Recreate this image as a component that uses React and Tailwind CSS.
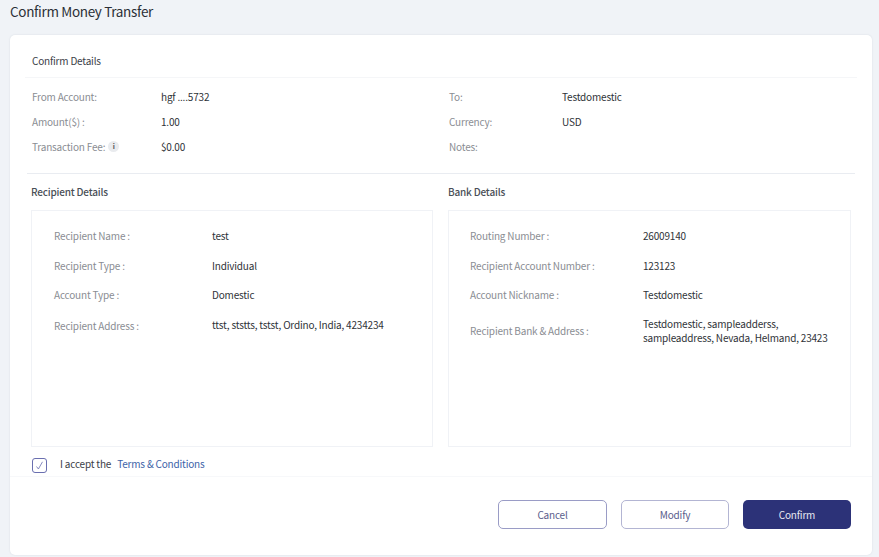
const font = { fontFamily: '"Noto Sans CJK SC", "Open Sans", sans-serif' };

const summaryLeft = [
  ['From Account:', 'hgf ....5732'],
  ['Amount($) :', '1.00'],
  ['Transaction Fee:', '$0.00'],
];

const summaryRight = [
  ['To:', 'Testdomestic'],
  ['Currency:', 'USD'],
  ['Notes:', ''],
];

const recipient = [
  ['Recipient Name :', 'test'],
  ['Recipient Type :', 'Individual'],
  ['Account Type :', 'Domestic'],
];

const bank = [
  ['Routing Number :', '26009140'],
  ['Recipient Account Number :', '123123'],
  ['Account Nickname :', 'Testdomestic'],
];

function SummaryRow({ label, value, labelWidth }) {
  return (
    <div className={`flex h-[25px] items-center text-[10px] ${labelWidth}`}>
      <div className="flex w-[129px] items-center gap-[3px] text-[#8a8d93]">
        {label}
        {label === 'Transaction Fee:' && (
          <span className="flex h-[11px] w-[11px] items-center justify-center rounded-full bg-[#e9ebee] text-[7px] font-bold text-[#555]">i</span>
        )}
      </div>
      <div className="text-[#2f3338]">{value}</div>
    </div>
  );
}

function DetailRow({ label, value, valueLeft }) {
  return (
    <div className="flex h-[29.5px] items-center text-[10px]">
      <div className={`text-[#8a8d93] ${valueLeft}`}>{label}</div>
      <div className="text-[#2f3338]">{value}</div>
    </div>
  );
}

export default function App() {
  return (
    <div style={font} className="flex h-[557px] w-[879px] flex-col overflow-hidden bg-[#f0f3f7] tracking-[-0.19px]">
      <div className="flex h-[35px] items-start pl-[10px] pt-[1px] text-[13.5px] leading-[20px] tracking-[-0.33px] text-[#2b2f36]">Confirm Money Transfer</div>

      <div className="ml-[10px] flex h-[520px] w-[862px] flex-col rounded-[5px] bg-white shadow-[0_0_2px_rgba(40,50,80,0.12)]">
        {/* Confirm details */}
        <div className="mx-[15px] flex h-[43px] items-center border-b border-[#f5f6f8] pl-[7px] pt-[9px] text-[10px] text-[#3b4048]">Confirm Details</div>

        <div className="mx-[17px] flex h-[96px] border-b border-[#e9ecf1] pt-[6px]">
          <div className="w-[417px] pl-[5px]">
            {summaryLeft.map(([label, value]) => (
              <SummaryRow key={label} label={label} value={value} />
            ))}
          </div>
          <div className="flex-1">
            {summaryRight.map(([label, value]) => (
              <SummaryRow key={label} label={label} value={value} labelWidth="pl-[5px] [&>div:first-child]:w-[113px]" />
            ))}
          </div>
        </div>

        {/* Recipient and bank */}
        <div className="ml-[21px] mt-[10px] flex gap-[15px]">
          <div className="w-[402px]">
            <div className="h-[26px] text-[10px] font-medium leading-[15px] text-[#4a4f57]">Recipient Details</div>
            <div className="h-[237px] border border-[#f0f2f6] pl-[22px] pt-[10px]">
              {recipient.map(([label, value]) => (
                <DetailRow key={label} label={label} value={value} valueLeft="w-[158px]" />
              ))}
              <div className="mt-[1px] flex h-[29px] items-center text-[10px]">
                <div className="w-[158px] text-[#8a8d93]">Recipient Address :</div>
                <div className="-mt-[1px] text-[#2f3338]">ttst, ststts, tstst, Ordino, India, 4234234</div>
              </div>
            </div>
          </div>
          <div className="w-[403px]">
            <div className="h-[26px] text-[10px] font-medium leading-[15px] text-[#4a4f57]">Bank Details</div>
            <div className="h-[237px] border border-[#f0f2f6] pl-[21px] pt-[10px]">
              {bank.map(([label, value]) => (
                <DetailRow key={label} label={label} value={value} valueLeft="w-[173px]" />
              ))}
              <div className="mt-[7px] flex items-center text-[10px]">
                <div className="w-[173px] text-[#8a8d93]">Recipient Bank &amp; Address :</div>
                <div className="leading-[14px] text-[#2f3338]">
                  Testdomestic, sampleadderss,
                  <br />
                  sampleaddress, Nevada, Helmand, 23423
                </div>
              </div>
            </div>
          </div>
        </div>

        {/* Terms */}
        <div className="flex h-[30px] items-center border-b border-[#f7f8fa] pl-[22px] pt-[4px] text-[10px]">
          <span className="mt-[4px] flex h-[15px] w-[15px] items-center justify-center rounded-[3px] border border-[#6a6fb0] text-[#6a6fb0]">
            <svg width="9" height="9" viewBox="0 0 9 9" fill="none" stroke="currentColor" strokeWidth="0.8">
              <path d="M1.5 5.5 L3.4 8 L7.5 0.8" />
            </svg>
          </span>
          <span className="ml-[13px] text-[#3b4048]">I accept the</span>
          <span className="ml-[6px] text-[#3d63a8]">Terms &amp; Conditions</span>
        </div>

        {/* Actions */}
        <div className="mr-[21px] mt-[23px] flex justify-end gap-[14px] text-[10px]">
          <button className="h-[29px] w-[109px] rounded-[5px] border border-[#9a9cc6] bg-white text-[#5a5d8c]">Cancel</button>
          <button className="h-[29px] w-[108px] rounded-[5px] border border-[#b3b5d3] bg-white text-[#5a5d8c]">Modify</button>
          <button className="h-[29px] w-[108px] rounded-[5px] bg-[#2c3278] text-[#e8e9f2]">Confirm</button>
        </div>
      </div>
    </div>
  );
}
